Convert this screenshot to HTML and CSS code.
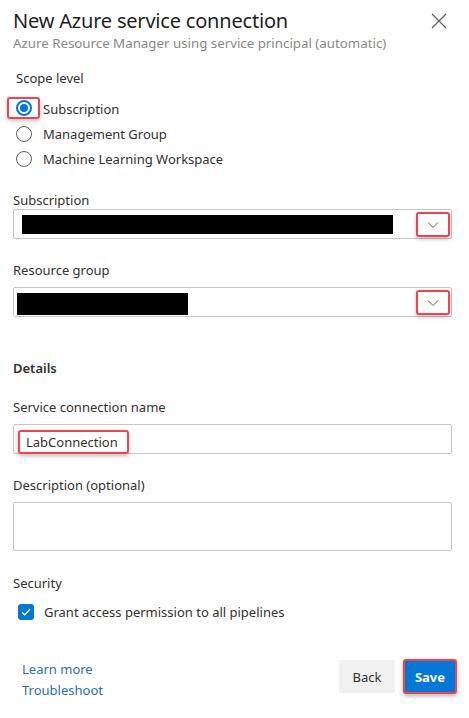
FILE: index.html
```html
<!DOCTYPE html>
<html lang="en">
<head>
<meta charset="utf-8">
<title>New Azure service connection</title>
<link rel="stylesheet" href="styles.css">
</head>
<body>
<div class="panel">
  <header class="head">
    <div class="titles">
      <h1 class="title">New Azure service connection</h1>
      <p class="subtitle">Azure Resource Manager using service principal (automatic)</p>
    </div>
    <button class="close" aria-label="Close">
      <svg width="16" height="16" viewBox="0 0 16 16"><path d="M1 1L15 15M15 1L1 15" stroke="#605e5c" stroke-width="1.2" fill="none"/></svg>
    </button>
  </header>

  <div class="scope">
    <div class="scope-label">Scope level</div>
    <div class="radios">
      <label class="radio-row">
        <span class="hl hl-radio"><span class="radio checked"></span></span>
        <span class="radio-text">Subscription</span>
      </label>
      <label class="radio-row">
        <span class="radio-slot"><span class="radio"></span></span>
        <span class="radio-text">Management Group</span>
      </label>
      <label class="radio-row">
        <span class="radio-slot"><span class="radio"></span></span>
        <span class="radio-text">Machine Learning Workspace</span>
      </label>
    </div>
  </div>

  <div class="field f-sub">
    <div class="label">Subscription</div>
    <div class="dropdown">
      <span class="redact redact-sub"></span>
      <span class="hl hl-chev">
        <svg width="12" height="8" viewBox="0 0 12 8"><path d="M1 1.5L6 6.5L11 1.5" stroke="#605e5c" stroke-width="1" fill="none"/></svg>
      </span>
    </div>
  </div>

  <div class="field f-rg">
    <div class="label">Resource group</div>
    <div class="dropdown dropdown-rg">
      <span class="redact redact-rg"></span>
      <span class="hl hl-chev">
        <svg width="12" height="8" viewBox="0 0 12 8"><path d="M1 1.5L6 6.5L11 1.5" stroke="#605e5c" stroke-width="1" fill="none"/></svg>
      </span>
    </div>
  </div>

  <div class="details">Details</div>

  <div class="field f-name">
    <div class="label">Service connection name</div>
    <div class="input">
      <span class="hl hl-name">LabConnection</span>
    </div>
  </div>

  <div class="field f-desc">
    <div class="label">Description (optional)</div>
    <div class="textarea"></div>
  </div>

  <div class="field f-sec">
    <div class="label">Security</div>
    <label class="check-row">
      <span class="checkbox">
        <svg width="10" height="8" viewBox="0 0 10 8"><path d="M1 4.2L3.7 6.8L9 1.2" stroke="#fff" stroke-width="1.3" fill="none"/></svg>
      </span>
      <span class="check-text">Grant access permission to all pipelines</span>
    </label>
  </div>

  <footer class="foot">
    <div class="links">
      <a href="#" class="link">Learn more</a>
      <a href="#" class="link">Troubleshoot</a>
    </div>
    <div class="buttons">
      <button class="btn btn-back">Back</button>
      <button class="btn btn-save">Save</button>
    </div>
  </footer>
</div>
</body>
</html>
```

FILE: styles.css
```css
* { box-sizing: border-box; }
html, body { margin: 0; padding: 0; background: #fff; }
body {
  font-family: "Noto Sans", "Open Sans", sans-serif;
  color: #323130;
  font-size: 13px;
  width: 469px;
  height: 718px;
  overflow: hidden;
}
.panel { padding: 0 17px 0 13px; }

.head { display: flex; justify-content: space-between; align-items: flex-start; padding-top: 7px; }
.title { margin: 0; font-size: 20px; font-weight: 400; line-height: 28px; color: #201f1e; letter-spacing: -0.2px; }
.subtitle { margin: -1px 0 0; font-size: 13.3px; line-height: 18px; color: #8a8886; }
.close { background: none; border: 0; padding: 0; margin: 6px 5px 0 0; width: 16px; height: 16px; display: block; }
.close svg { display: block; }

.scope { margin-top: 17px; }
.scope-label { padding-left: 3px; line-height: 18px; }
.radios { margin-top: 9px; display: flex; flex-direction: column; }
.radio-row { display: flex; align-items: center; height: 25px; }
.radio-slot { width: 30px; display: flex; align-items: center; padding-left: 3px; }
.radio {
  width: 16px; height: 16px; border-radius: 50%;
  border: 1px solid #605e5c; background: #fff; display: block;
}
.radio.checked { border: 2px solid #0078d4; position: relative; }
.radio.checked::after {
  content: ""; position: absolute; left: 2px; top: 2px; width: 8px; height: 8px;
  border-radius: 50%; background: #0078d4;
}
.radio-text { line-height: 18px; }

.hl {
  border: 2px solid #ef4450; border-radius: 3px;
  box-shadow: 0 2px 4px rgba(0,0,0,0.25);
  display: flex; align-items: center; justify-content: center;
}
.hl-radio { width: 33px; height: 22px; margin-left: -6px; margin-right: 3px; margin-top: -1px; }

.label { line-height: 18px; }
.f-sub { margin-top: 20px; }
.f-rg { margin-top: 22px; }
.dropdown-rg { margin-top: 8px; }
.dropdown, .input {
  height: 30px; border: 1px solid #c8c6c4; border-radius: 2px;
  display: flex; align-items: center; justify-content: space-between;
  width: 439px;
}
.dropdown { padding: 0 1px 0 8px; }
.dropdown-rg { padding-left: 3px; }
.redact { background: #000; display: block; }
.redact-sub { width: 371px; height: 19px; }
.redact-rg { width: 171px; height: 22px; margin-top: 3px; }
.hl-chev { width: 34px; height: 25px; }
.hl-chev svg { display: block; margin-top: 1px; }

.details { margin-top: 42px; font-weight: 600; line-height: 18px; }
.f-name { margin-top: 21px; }
.input { margin-top: 8px; padding-left: 4px; justify-content: flex-start; align-items: flex-end; }
.hl-name { height: 24px; padding: 0 9px 0 6px; margin-bottom: -1px; color: #323130; font-size: 13px; line-height: 18px; }

.f-desc { margin-top: 22px; }
.textarea { margin-top: 8px; width: 439px; height: 49px; border: 1px solid #c8c6c4; border-radius: 2px; }

.f-sec { margin-top: 23px; }
.check-row { display: flex; align-items: center; margin-top: 11px; padding-left: 5px; }
.checkbox {
  width: 16px; height: 16px; border-radius: 3px; background: #0078d4;
  display: flex; align-items: center; justify-content: center; margin-right: 10px;
}
.checkbox svg { display: block; }
.check-text { line-height: 18px; }

.foot { display: flex; justify-content: space-between; align-items: flex-start; margin-top: 38px; padding-left: 9px; }
.links { display: flex; flex-direction: column; margin-top: 0; }
.link { color: #2e6fb0; text-decoration: none; line-height: 21px; }
.buttons { display: flex; align-items: flex-start; gap: 8px; margin-right: -5px; }
.btn {
  font-family: inherit; font-size: 13px; border: 0; border-radius: 2px; cursor: pointer;
}
.btn-back { background: #f0f0f0; color: #323130; width: 56px; height: 33px; margin-top: 1px; }
.btn-save {
  background: #0078d4; color: #fff; font-weight: 700; width: 54px; height: 35px;
  border: 2px solid #ef4450; border-radius: 3px;
  box-shadow: 0 2px 4px rgba(0,0,0,0.3);
}
```
